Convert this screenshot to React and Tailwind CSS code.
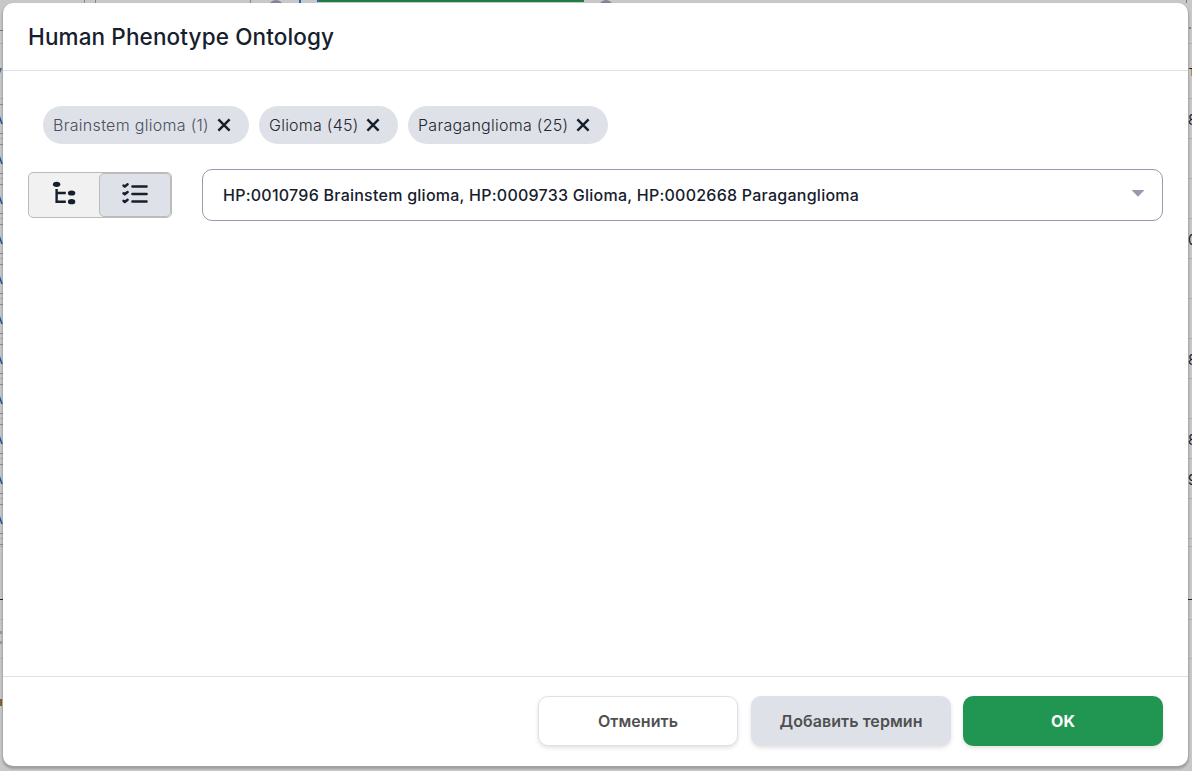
import React from "react";

const leftRows = Array.from({ length: 11 }, (_, i) => i);
const rightRows = ["8", "", "", "0", "", "", "8", "", "8", "9", ""];
const terms = [
  { name: "Brainstem glioma (1)", tone: "text-[#4a515c]", width: "w-[206px]", tracking: "tracking-[0.3px]" },
  { name: "Glioma (45)", tone: "text-[#23272f]", width: "w-[139px]", tracking: "tracking-[0.25px]" },
  { name: "Paraganglioma (25)", tone: "text-[#23272f]", width: "w-[200px]", tracking: "tracking-[0.27px]" },
];

// Top edge of the dimmed page above the dialog.
function TopEdge() {
  return (
    <div aria-hidden="true" className="flex h-[3px] shrink-0 items-start overflow-hidden">
      <i className="ml-[84px] h-full w-px bg-[#85859a]" />
      <i className="ml-[10px] h-full w-px bg-[#85859a]" />
      <i className="ml-[154px] h-full w-px bg-[#85859a]" />
      <i className="ml-[18px] h-4 w-[14px] shrink-0 rounded-full bg-[#85859a]" />
      <i className="ml-[16px] h-full w-[2px] bg-[#2368bf]" />
      <i className="ml-[16px] h-[2px] w-[267px] border-l-2 border-[#2368bf] bg-[#1f7c45]" />
      <i className="ml-[15px] h-4 w-[14px] shrink-0 rounded-full bg-[#85859a]" />
      <i className="ml-[573px] h-full w-px bg-[#77778c]" />
    </div>
  );
}

// Table cells of the dimmed page, left of the dialog.
function LeftEdge() {
  return (
    <div aria-hidden="true" className="flex w-[3px] shrink-0 flex-col overflow-hidden text-[14px] leading-[20px]">
      <div className="mt-[27px] h-[14px] shrink-0 border-y border-t-[#77778c] border-b-[#b3b5b9]" />
      <div className="flex h-[54px] shrink-0 items-center justify-end pr-px text-[#3b4a63]">
        <span>у</span>
      </div>
      {leftRows.map((row) => (
        <div key={row} className="h-10 shrink-0 border-t border-[#acb2bc] pt-[5px]">
          <div className="flex h-[30px] items-center justify-end border-y border-[#8e8e8e] text-[#164c88]">
            <span>A</span>
          </div>
        </div>
      ))}
      <div className="h-[9px] shrink-0 border-y border-[#acb2bc] pt-[5px]">
        <div className="h-px bg-[#8e8e8e]" />
      </div>
      <div className="mt-[52px] h-px shrink-0 bg-[#20242c]" />
      <div className="mt-[19px] h-[40px] shrink-0 border-y border-[#b3b8c0] pt-[11px]">
        <div className="h-[3px] w-[2px] bg-[#969ba1]" />
        <div className="mt-[7px] h-[3px] w-[2px] bg-[#969ba1]" />
      </div>
      <div className="mt-[40px] h-[7px] w-[2px] shrink-0 bg-[#8a6030]" />
    </div>
  );
}

// Table cells of the dimmed page, right of the dialog.
function RightEdge() {
  return (
    <div aria-hidden="true" className="flex w-[4px] shrink-0 flex-col overflow-hidden text-[14px] leading-[20px] text-[#16202c]">
      <div className="h-[41px] shrink-0 border-b border-[#b3b5b9] pt-[24px] pl-px">
        <div className="h-[2px] w-[2px] bg-[#85858f]" />
      </div>
      <div className="flex h-[54px] shrink-0 items-center pl-px">
        <span>т</span>
      </div>
      {rightRows.map((mark, i) => (
        <div key={i} className="flex h-10 shrink-0 items-center border-t border-[#acb2bc] pt-[2px]">
          <span>{mark}</span>
        </div>
      ))}
      <div className="h-[9px] shrink-0 border-y border-[#acb2bc]" />
      <div className="mt-[52px] h-px shrink-0 bg-[#20242c]" />
      <div className="mt-[19px] h-[40px] shrink-0 border-y border-[#b3b8c0]" />
    </div>
  );
}

function TreeIcon() {
  return (
    <svg width="24" height="24" viewBox="0 0 24 24" className="block" fill="#16202c">
      <ellipse cx="4.6" cy="3.3" rx="3.7" ry="2.6" />
      <ellipse cx="19.6" cy="12" rx="3.7" ry="2.6" />
      <ellipse cx="19.6" cy="20.7" rx="3.7" ry="2.6" />
      <path d="M4.6 8v12.7h9.2M4.6 12h9.2" fill="none" stroke="#16202c" strokeWidth="2.4" />
    </svg>
  );
}

function ChecklistIcon() {
  return (
    <svg width="28" height="24" viewBox="0 0 28 24" className="block" fill="none" stroke="#16202c" strokeLinecap="round" strokeLinejoin="round">
      <path d="M11.4 4.5h14.2M11.4 12h14.2M11.4 19.5h14.2" strokeWidth="2.4" />
      <path d="M2.5 3.5l1.3 1.1 2.8-2.3M2.5 11.2l1.3 1.1 2.8-2.3M2.5 18.9l1.3 1.1 2.8-2.3" strokeWidth="2.5" />
    </svg>
  );
}

export default function App() {
  return (
    <div className="flex h-[771px] w-[1192px] flex-col overflow-hidden bg-[#c8c8c8] font-['Inter','Liberation_Sans',sans-serif]">
      <TopEdge />
      <div className="flex h-[768px]">
        <LeftEdge />
        <section role="dialog" aria-labelledby="title" className="relative flex h-[763px] w-[1185px] flex-col rounded-[10px] bg-white shadow-[0_2px_2px_1px_rgba(0,0,0,0.2)]">
          <header className="flex h-[68px] shrink-0 items-center border-b border-[#dfe1e9] px-[25px]">
            <h1 id="title" className="text-[22.5px] leading-[30px] font-medium tracking-[0.13px] text-[#16202c]">Human Phenotype Ontology</h1>
          </header>
          <main className="flex-1 px-[25px] pt-[35px]">
            <div className="flex gap-[10px] pl-[15px]">
              {terms.map((term) => (
                <div key={term.name} className={`flex h-[38px] items-center justify-between rounded-full bg-[#dfe1e9] pr-[18px] pl-[10px] ${term.width}`}>
                  <span className={`text-[16px] font-light whitespace-nowrap ${term.tracking} ${term.tone}`}>{term.name}</span>
                  <svg width="14" height="14" viewBox="0 0 14 14" fill="none" stroke="#16202c" strokeWidth="2.5" className="shrink-0">
                    <path d="M1.4 1.4l11.2 11.2M12.6 1.4L1.4 12.6" />
                  </svg>
                </div>
              ))}
            </div>
            <div className="mt-[25px] flex items-start gap-[30px]">
              <div className="mt-[3px] flex h-[46px] w-[144px] rounded-[5px] border border-[#bbb] bg-[#f1f1f1]">
                <button className="flex w-[70px] items-start justify-center pt-[8px]"><TreeIcon /></button>
                <button className="flex w-[72px] items-start justify-center rounded-[5px] border border-[#bbb] bg-[#dfe1e9] pt-[8px]"><ChecklistIcon /></button>
              </div>
              <div className="flex h-[52px] w-[961px] items-center justify-between rounded-[10px] border border-[#9a98ad] pr-[17px] pl-5">
                <span className="text-[16px] font-medium tracking-[0.25px] text-[#16202c]">HP:0010796 Brainstem glioma, HP:0009733 Glioma, HP:0002668 Paraganglioma</span>
                <svg width="14" height="7" viewBox="0 0 14 7" className="mb-[3px]" fill="#9a98ad"><path d="M.5 0h13L7 6.7z" /></svg>
              </div>
            </div>
          </main>
          <footer className="flex h-[90px] shrink-0 justify-end gap-[13px] border-t border-[#dfe1e9] pt-[19px] pr-[25px] text-[16px] font-semibold tracking-[0.08px] text-[#505050]">
            <button className="h-[50px] w-[200px] rounded-[10px] border border-[#dfe1e9] bg-white shadow-[0_2px_4px_rgba(0,0,0,0.12)]">Отменить</button>
            <button className="h-[50px] w-[200px] rounded-[10px] bg-[#dfe1e9] shadow-[0_2px_4px_rgba(0,0,0,0.12)]">Добавить термин</button>
            <button className="-ml-px h-[50px] w-[200px] rounded-[10px] bg-[#219653] font-bold text-white shadow-[0_2px_4px_rgba(0,0,0,0.12)]">OK</button>
          </footer>
        </section>
        <RightEdge />
      </div>
    </div>
  );
}
